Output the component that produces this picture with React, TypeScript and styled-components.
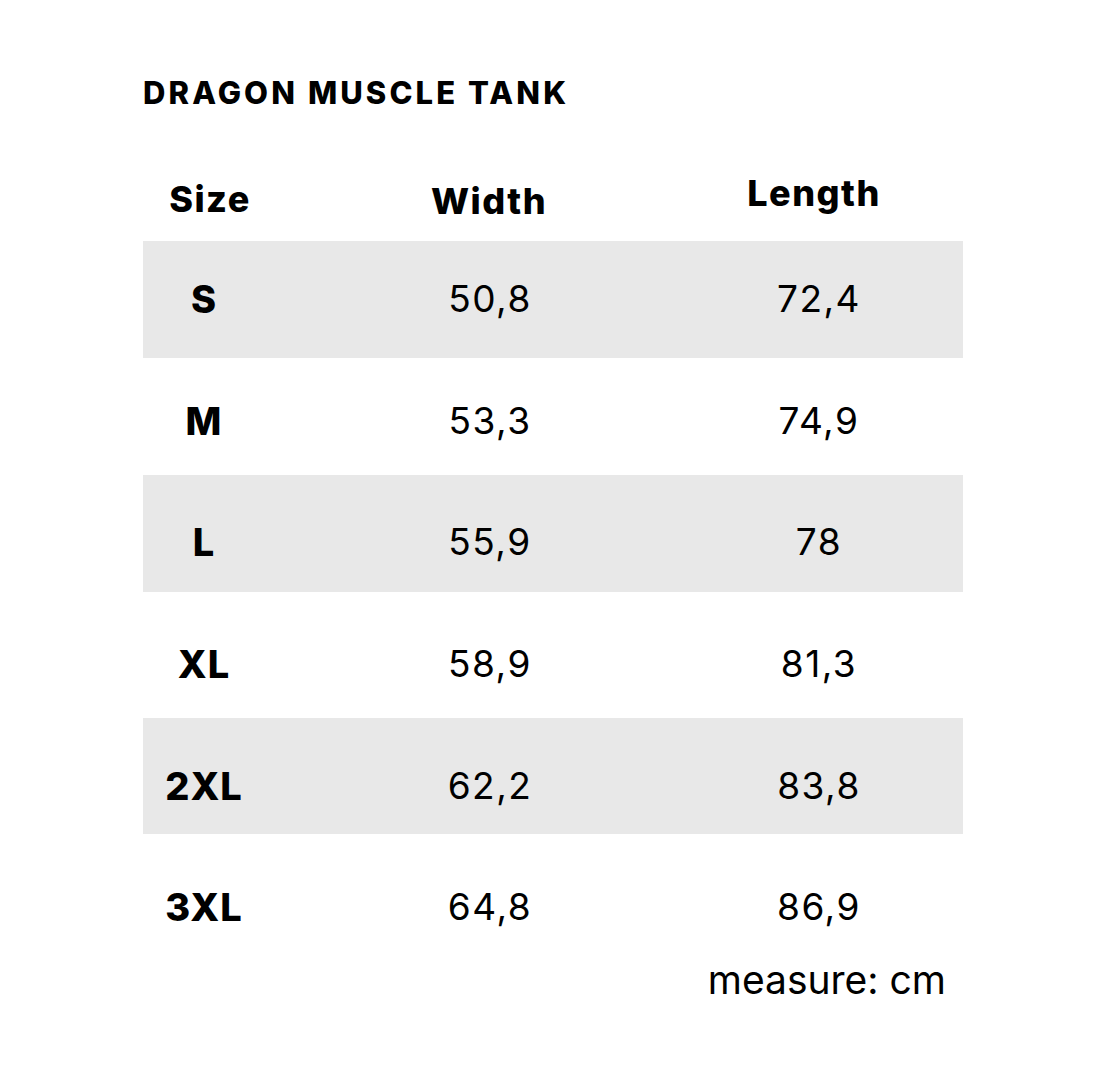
import React from 'react'
import styled, { createGlobalStyle } from 'styled-components'

const GlobalStyle = createGlobalStyle`
  html, body {
    margin: 0;
    padding: 0;
    background: #ffffff;
  }
  body {
    font-family: Inter, "Noto Sans", sans-serif;
    color: #000;
  }
`

const sizes = [
  { label: 'S', width: '50,8', length: '72,4', height: 117, drop: 38, shaded: true },
  { label: 'M', width: '53,3', length: '74,9', height: 117, drop: 43, shaded: false },
  { label: 'L', width: '55,9', length: '78', height: 117, drop: 47, shaded: true },
  { label: 'XL', width: '58,9', length: '81,3', height: 126, drop: 52, shaded: false },
  { label: '2XL', width: '62,2', length: '83,8', height: 116, drop: 48, shaded: true },
  { label: '3XL', width: '64,8', length: '86,9', height: 121, drop: 53, shaded: false },
]

export default function App() {
  return (
    <Page>
      <GlobalStyle />
      <Title>DRAGON MUSCLE TANK</Title>
      <Table>
        <HeadRow>
          <HeadCell drop={19}>Size</HeadCell>
          <HeadCell drop={21}>Width</HeadCell>
          <HeadCell drop={13}>Length</HeadCell>
        </HeadRow>
        {sizes.map((s) => (
          <Row key={s.label} shaded={s.shaded} rowHeight={s.height} drop={s.drop}>
            <SizeCell>{s.label}</SizeCell>
            <ValueCell>{s.width}</ValueCell>
            <ValueCell>{s.length}</ValueCell>
          </Row>
        ))}
      </Table>
      <Note>measure: cm</Note>
    </Page>
  )
}

const Page = styled.div`
  width: 1106px;
  height: 1076px;
  box-sizing: border-box;
  padding: 75px 0 0 143px;
  overflow: hidden;
`

const Title = styled.h1`
  margin: 0;
  font-size: 31px;
  line-height: 36px;
  font-weight: 800;
  letter-spacing: 3.1px;
`

const Table = styled.div`
  width: 820px;
  margin-top: 49px;
  display: flex;
  flex-direction: column;
`

const HeadRow = styled.div`
  display: grid;
  grid-template-columns: 134px 424px 226px;
  height: 81px;
  align-items: start;
`

const HeadCell = styled.div<{ drop: number }>`
  padding-top: ${(p) => p.drop}px;
  text-align: center;
  font-size: 36px;
  line-height: 40px;
  font-weight: 800;
  letter-spacing: 1.5px;
`

const Row = styled.div<{ shaded: boolean; rowHeight: number; drop: number }>`
  display: grid;
  grid-template-columns: 122px 450px 208px;
  align-items: start;
  box-sizing: border-box;
  height: ${(p) => p.rowHeight}px;
  padding-top: ${(p) => p.drop}px;
  background: ${(p) => (p.shaded ? '#e8e8e8' : '#ffffff')};
`

const SizeCell = styled.div`
  text-align: center;
  font-size: 38px;
  line-height: 40px;
  font-weight: 800;
  letter-spacing: 1px;
`

const ValueCell = styled.div`
  text-align: center;
  font-size: 37px;
  line-height: 40px;
  font-weight: 400;
  letter-spacing: 1.5px;
`

const Note = styled.div`
  width: 803px;
  text-align: right;
  margin-top: 1px;
  font-size: 39px;
  line-height: 48px;
  font-weight: 400;
  letter-spacing: 0px;
`
